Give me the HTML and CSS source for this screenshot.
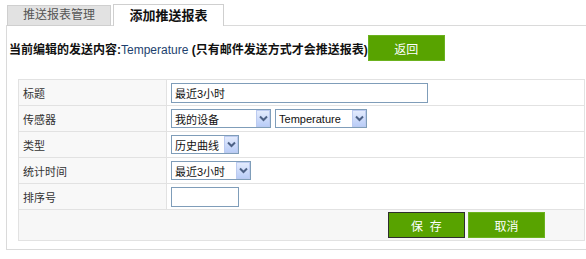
FILE: index.html
```html
<!DOCTYPE html>
<html lang="zh-CN">
<head>
    <meta charset="UTF-8">
    <title>添加推送报表</title>
    <link rel="stylesheet" href="styles.css">
</head>
<body>

    <div class="tabs">
        <span class="tab">推送报表管理</span>
        <span class="tab active">添加推送报表</span>
    </div>

    <div class="panel">
        <div class="head">
            <span class="head-text"><b>当前编辑的发送内容:</b><span class="name">Temperature</span> <b>(只有邮件发送方式才会推送报表)</b></span>
            <button class="btn">返回</button>
        </div>

        <table class="form">
            <tr>
                <td class="label">标题</td>
                <td class="field"><input type="text" class="text title-input" value="最近3小时"></td>
            </tr>
            <tr>
                <td class="label">传感器</td>
                <td class="field">
                    <span class="select w-device"><span class="val">我的设备</span><span class="arrow"><svg width="9" height="7" viewBox="0 0 9 7"><polyline points="1,1.5 4.5,5 8,1.5" fill="none" stroke="#4d6185" stroke-width="2"/></svg></span></span>
                    <span class="select w-sensor"><span class="val">Temperature</span><span class="arrow"><svg width="9" height="7" viewBox="0 0 9 7"><polyline points="1,1.5 4.5,5 8,1.5" fill="none" stroke="#4d6185" stroke-width="2"/></svg></span></span>
                </td>
            </tr>
            <tr>
                <td class="label">类型</td>
                <td class="field">
                    <span class="select w-type"><span class="val">历史曲线</span><span class="arrow"><svg width="9" height="7" viewBox="0 0 9 7"><polyline points="1,1.5 4.5,5 8,1.5" fill="none" stroke="#4d6185" stroke-width="2"/></svg></span></span>
                </td>
            </tr>
            <tr>
                <td class="label">统计时间</td>
                <td class="field">
                    <span class="select w-time"><span class="val">最近3小时</span><span class="arrow"><svg width="9" height="7" viewBox="0 0 9 7"><polyline points="1,1.5 4.5,5 8,1.5" fill="none" stroke="#4d6185" stroke-width="2"/></svg></span></span>
                </td>
            </tr>
            <tr>
                <td class="label">排序号</td>
                <td class="field"><input type="text" class="text order-input" value=""></td>
            </tr>
            <tr>
                <td class="actions" colspan="2">
                    <button class="btn focused">保&nbsp;&nbsp;存</button>
                    <button class="btn">取消</button>
                </td>
            </tr>
        </table>
    </div>

</body>
</html>
```

FILE: styles.css
```css
html {
    overflow: hidden;
}

body {
    font-family: "Liberation Sans", "Noto Sans CJK SC", sans-serif;
    font-size: 12px;
    color: #333;
    background: #fff;
    margin: 0;
}

.tabs {
    display: flex;
    align-items: flex-end;
    gap: 2px;
    padding: 4px 0 0 7px;
    margin-bottom: -1px;
}

.tab {
    position: relative;
    box-sizing: border-box;
    height: 21px;
    width: 104px;
    line-height: 19px;
    text-align: center;
    font-size: 12px;
    color: #555;
    background: #e2e2e2;
    border: 1px solid #cfcfcf;
}

.tab.active {
    z-index: 1;
    height: 22px;
    width: 111px;
    line-height: 22px;
    font-size: 13px;
    color: #111;
    font-weight: bold;
    background: #fff;
    border-bottom: 0;
}

.panel {
    width: 600px;
    margin-left: 6px;
    padding: 9px 0 8px 1px;
    border: 1px solid #dadada;
}

.head {
    display: flex;
    align-items: center;
    padding-left: 1px;
}

.head-text {
    color: #111;
    white-space: nowrap;
}

.head-text .name {
    color: #1d3f6e;
}

.btn {
    box-sizing: border-box;
    width: 77px;
    height: 26px;
    padding: 0;
    font-family: inherit;
    font-size: 12px;
    color: #fff;
    background: #58a300;
    border: 1px solid #6bb21e;
    cursor: pointer;
}

.head .btn {
    margin-left: 0;
}

.btn.focused {
    border-color: #2e2e2e;
}

.form {
    width: 567px;
    margin: 18px 0 0 10px;
    font-size: 11px;
    border-collapse: collapse;
    border: 1px solid #e2e2e2;
}

.form td {
    height: 25px;
    padding: 0 4px;
    border: 1px solid #e2e2e2;
    vertical-align: middle;
}

.form .label {
    width: 139px;
    background: #f8f8f8;
    color: #333;
}

.form .field {
    background: #fff;
}

.form .actions {
    height: 30px;
    padding-right: 39px;
    text-align: right;
    background: #f7f7f7;
}

.text {
    box-sizing: border-box;
    height: 20px;
    margin: 0;
    padding: 0 3px;
    font-family: inherit;
    font-size: 11px;
    color: #111;
    border: 1px solid #7f9db9;
    vertical-align: middle;
}

.title-input {
    width: 257px;
}

.order-input {
    width: 68px;
}

.select {
    box-sizing: border-box;
    display: inline-flex;
    align-items: center;
    height: 19px;
    margin-right: 1px;
    border: 1px solid #7f9db9;
    background: #fff;
    vertical-align: middle;
}

.select .val {
    flex: 1;
    min-width: 0;
    padding-left: 3px;
    color: #111;
    white-space: nowrap;
    overflow: hidden;
}

.select .arrow {
    box-sizing: border-box;
    flex: none;
    display: flex;
    align-items: center;
    justify-content: center;
    width: 14px;
    height: 17px;
    border: 1px solid #bccbf0;
    background: linear-gradient(#e3ebfd, #bacdf7);
}

.w-device {
    width: 100px;
}

.w-sensor {
    width: 92px;
}

.w-type {
    width: 68px;
}

.w-time {
    width: 80px;
}
```
